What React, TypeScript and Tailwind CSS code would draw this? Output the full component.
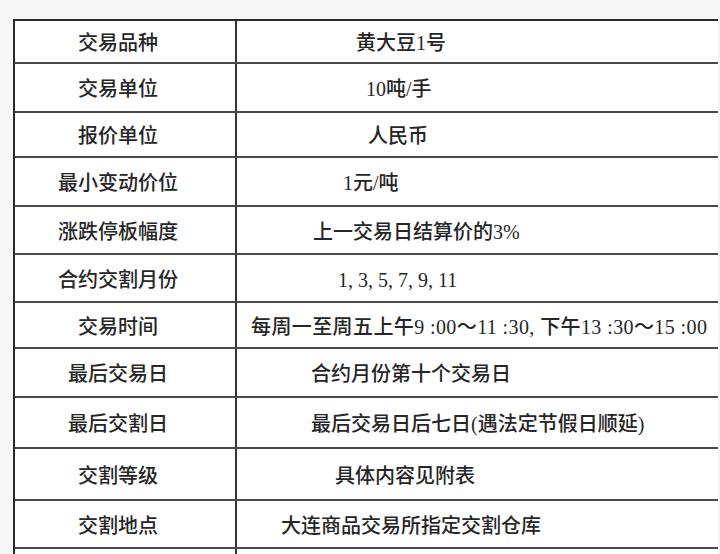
import React from 'react'

type Row = { label: string; value: string; h: string; pad: string }

// heights include the 2px bottom rule; pad puts the value where the scan has it
const ROWS: Row[] = [
  { label: '交易品种', value: '黄大豆1号', h: 'h-[43px]', pad: 'pl-[119px]' },
  { label: '交易单位', value: '10吨/手', h: 'h-[49px]', pad: 'pl-[129px]' },
  { label: '报价单位', value: '人民币', h: 'h-[45px]', pad: 'pl-[131px]' },
  { label: '最小变动价位', value: '1元/吨', h: 'h-[49px]', pad: 'pl-[106px]' },
  { label: '涨跌停板幅度', value: '上一交易日结算价的3%', h: 'h-[48px]', pad: 'pl-[76px]' },
  { label: '合约交割月份', value: '1, 3, 5, 7, 9, 11', h: 'h-[48px]', pad: 'pl-[101px]' },
  { label: '交易时间', value: '每周一至周五上午9 :00～11 :30, 下午13 :30～15 :00', h: 'h-[46px]', pad: 'pl-[14px] tracking-[0.4px]' },
  { label: '最后交易日', value: '合约月份第十个交易日', h: 'h-[49px]', pad: 'pl-[74px]' },
  { label: '最后交割日', value: '最后交易日后七日(遇法定节假日顺延)', h: 'h-[51px]', pad: 'pl-[74px]' },
  { label: '交割等级', value: '具体内容见附表', h: 'h-[52px]', pad: 'pl-[98px]' },
  { label: '交割地点', value: '大连商品交易所指定交割仓库', h: 'h-[48px]', pad: 'pl-[44px]' },
  { label: '', value: '', h: 'h-[48px]', pad: 'pl-[44px]' },
]

export default function App() {
  return (
    <div
      className="w-[720px] h-[554px] overflow-hidden bg-[#f6f6f6] pt-[19px] pl-[13px] text-[#262626]"
      style={{ fontFamily: '"Liberation Serif", "Noto Sans CJK SC", serif' }}
    >
      <div className="w-[705px] bg-white border-t-2 border-l-2 border-[#2b2b2b]">
        {ROWS.map((r, i) => (
          <div key={i} className={`flex border-b-2 border-[#4a4a4a] ${r.h}`}>
            <div className="w-[222px] shrink-0 border-r-2 border-[#333] flex items-center justify-center pr-[14px] pt-[3px] text-[20px] font-medium">
              {r.label}
            </div>
            <div className={`flex-1 flex items-center pt-[3px] text-[20px] font-medium whitespace-nowrap ${r.pad}`}>
              {r.value}
            </div>
          </div>
        ))}
      </div>
    </div>
  )
}
